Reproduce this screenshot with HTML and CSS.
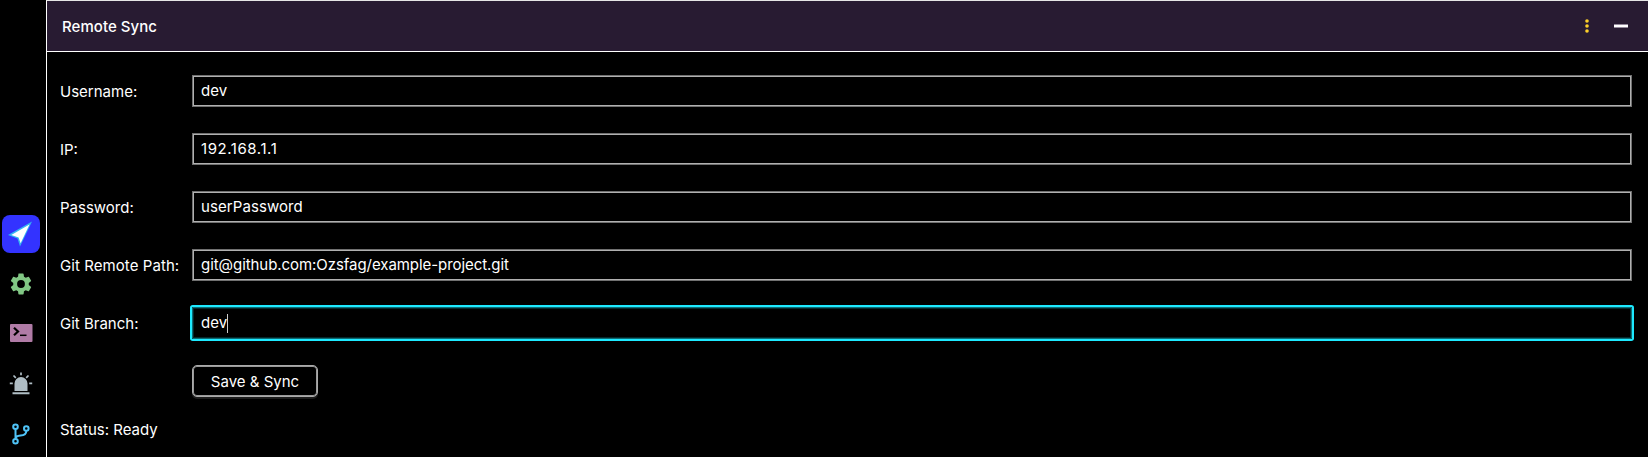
FILE: index.html
```
<!DOCTYPE html>
<html lang="en">
<head>
<meta charset="utf-8">
<title>Remote Sync</title>
<link rel="stylesheet" href="styles.css">
</head>
<body>
<div class="app">
  <nav class="rail">
    <a class="rail-item active">
      <svg width="38" height="38" viewBox="0 0 38 38"><path d="M30 6.500 6 20l9.500 3.400L18 31.500z" fill="#35b5f2"/><path d="M27.500 9.500 9.300 20.100l7.300 2.400 2 5.700z" fill="#fff"/></svg>
    </a>
    <a class="rail-item gear">
      <svg width="26" height="26" viewBox="0 0 24 24" fill="#81c784"><path d="M19.140 12.940c.04-.3.060-.61.060-.94s-.02-.64-.07-.94l2.030-1.580a.49.490 0 0 0 .12-.61l-1.920-3.320a.488.488 0 0 0-.59-.22l-2.390.96c-.5-.38-1.030-.7-1.620-.94l-.36-2.540a.484.484 0 0 0-.48-.41h-3.840c-.24 0-.43.170-.47.410l-.36 2.540c-.59.240-1.130.570-1.620.940l-2.390-.96c-.22-.08-.47 0-.59.220L2.740 8.870c-.12.210-.08.470.12.610l2.030 1.580c-.05.300-.09.630-.09.940s.02.640.07.940l-2.030 1.580a.49.490 0 0 0-.12.610l1.920 3.320c.12.220.370.290.590.220l2.390-.96c.5.380 1.030.700 1.620.940l.36 2.540c.05.240.240.410.480.410h3.840c.24 0 .44-.17.470-.41l.36-2.540c.59-.24 1.130-.56 1.620-.94l2.390.96c.22.080.470 0 .59-.22l1.920-3.320c.12-.22.070-.47-.12-.61zM12 15.600A3.600 3.600 0 1 1 12 8.400a3.600 3.600 0 0 1 0 7.200z"/></svg>
    </a>
    <a class="rail-item terminal">
      <svg width="24" height="20" viewBox="0 0 24 20"><rect x="1" y="1" width="22.500" height="18" rx="1" fill="#b07ba6"/><path d="m5 4.800 4 3.700-4 3.700" fill="none" stroke="#000" stroke-width="2.200"/><path d="M11 12.300h6.500" stroke="#000" stroke-width="1.500"/></svg>
    </a>
    <a class="rail-item">
      <svg width="24" height="24" viewBox="0 0 24 24"><path d="M5.500 19v-7.500a6.500 6.500 0 0 1 13 0V19zM3.500 20.300h17v2h-17z" fill="#b0bec5"/><path d="M12 .5v2.800M4.500 3.500l2.300 2.300M19.500 3.500l-2.300 2.300M.8 11.300h3M20.200 11.300h3" stroke="#b0bec5" stroke-width="1.700"/></svg>
    </a>
    <a class="rail-item">
      <svg width="24" height="24" viewBox="0 0 24 24" fill="none" stroke="#4fc3f7" stroke-width="2"><circle cx="6.500" cy="4.700" r="2.300"/><circle cx="6.500" cy="19.300" r="2.300"/><circle cx="17.300" cy="6.500" r="2.300"/><path d="M6.500 7v10M17.300 9c0 4-3 4.300-5.800 4.500-2.500.200-5 .500-5 3.500"/></svg>
    </a>
  </nav>
  <main class="panel">
    <header class="panel-header">
      <h1 class="title">Remote Sync</h1>
      <div class="actions">
        <svg width="6" height="16" viewBox="0 0 6 16" fill="#fdd029"><circle cx="3" cy="3" r="1.800"/><circle cx="3" cy="8" r="1.800"/><circle cx="3" cy="13" r="1.800"/></svg>
        <span class="minimize"></span>
      </div>
    </header>
    <div class="form">
      <div class="label">Username:</div><div class="input">dev</div>
      <div class="label">IP:</div><div class="input address">192.168.1.1</div>
      <div class="label">Password:</div><div class="input password">userPassword</div>
      <div class="label path-label">Git Remote Path:</div><div class="input path">git@github.com:Ozsfag/example-project.git</div>
      <div class="label">Git Branch:</div><div class="input focused">dev<span class="caret"></span></div>
      <button class="save">Save &amp; Sync</button>
    </div>
    <div class="status">Status: Ready</div>
  </main>
</div>
</body>
</html>
```
FILE: styles.css
```
* { box-sizing: border-box; }
body { margin: 0; background: #000; color: #fff; font: 15px/20px Inter, sans-serif; }
.app { display: flex; height: 457px; overflow: hidden; }
.rail { width: 46px; flex: none; padding: 215px 0 0 2px; }
.rail-item { width: 38px; height: 38px; margin-bottom: 12px; border-radius: 8px; display: flex; align-items: center; justify-content: center; }
.rail-item.active { background: #3333ff; }
.gear { padding-right: 1px; }
.terminal { padding: 0 1px 2px 0; }
.panel { flex: 1; border-left: 1px solid #fff; border-top: 1px solid #e6e6e6; }
.panel-header { height: 51px; background: #281b32; border-bottom: 1px solid #fff; display: flex; align-items: center; justify-content: space-between; padding: 0 20px 0 15px; }
.title { margin: 0; padding-top: 2px; font-size: 15px; font-weight: 500; letter-spacing: 0.05px; }
.actions { display: flex; align-items: center; gap: 24px; }
.minimize { width: 14px; height: 4px; background: #fff; border: solid #93899a; border-width: 1px 0; }
.form { display: grid; grid-template-columns: 120px 1fr; column-gap: 12px; row-gap: 26px; grid-auto-rows: 32px; padding: 23px 16px 0 13px; }
.label { line-height: 33px; white-space: nowrap; }
.path-label { letter-spacing: 0.07px; }
.input { border: 1px solid #707070; box-shadow: inset 0 0 0 1px #b0b0b0; padding: 0 8px; line-height: 30px; display: flex; align-items: center; }
.address { letter-spacing: 0.56px; }
.password { letter-spacing: 0.08px; }
.path { letter-spacing: -0.06px; }
.focused { border-color: #0e6a73; box-shadow: inset 0 0 0 1px #04282c, 0 0 0 2px #1de9ff; border-radius: 1px; }
.caret { width: 1px; height: 19px; background: #ccc; }
.save { grid-column: 2; width: 126px; padding: 2px 0 0; border: 1px solid #aaa; border-radius: 5px; background: #000; color: #fff; font: inherit; box-shadow: inset 0 0 0 1px #999, 0 2px 0 #1c1c1c; }
.status { padding: 23px 0 0 13px; }
```
